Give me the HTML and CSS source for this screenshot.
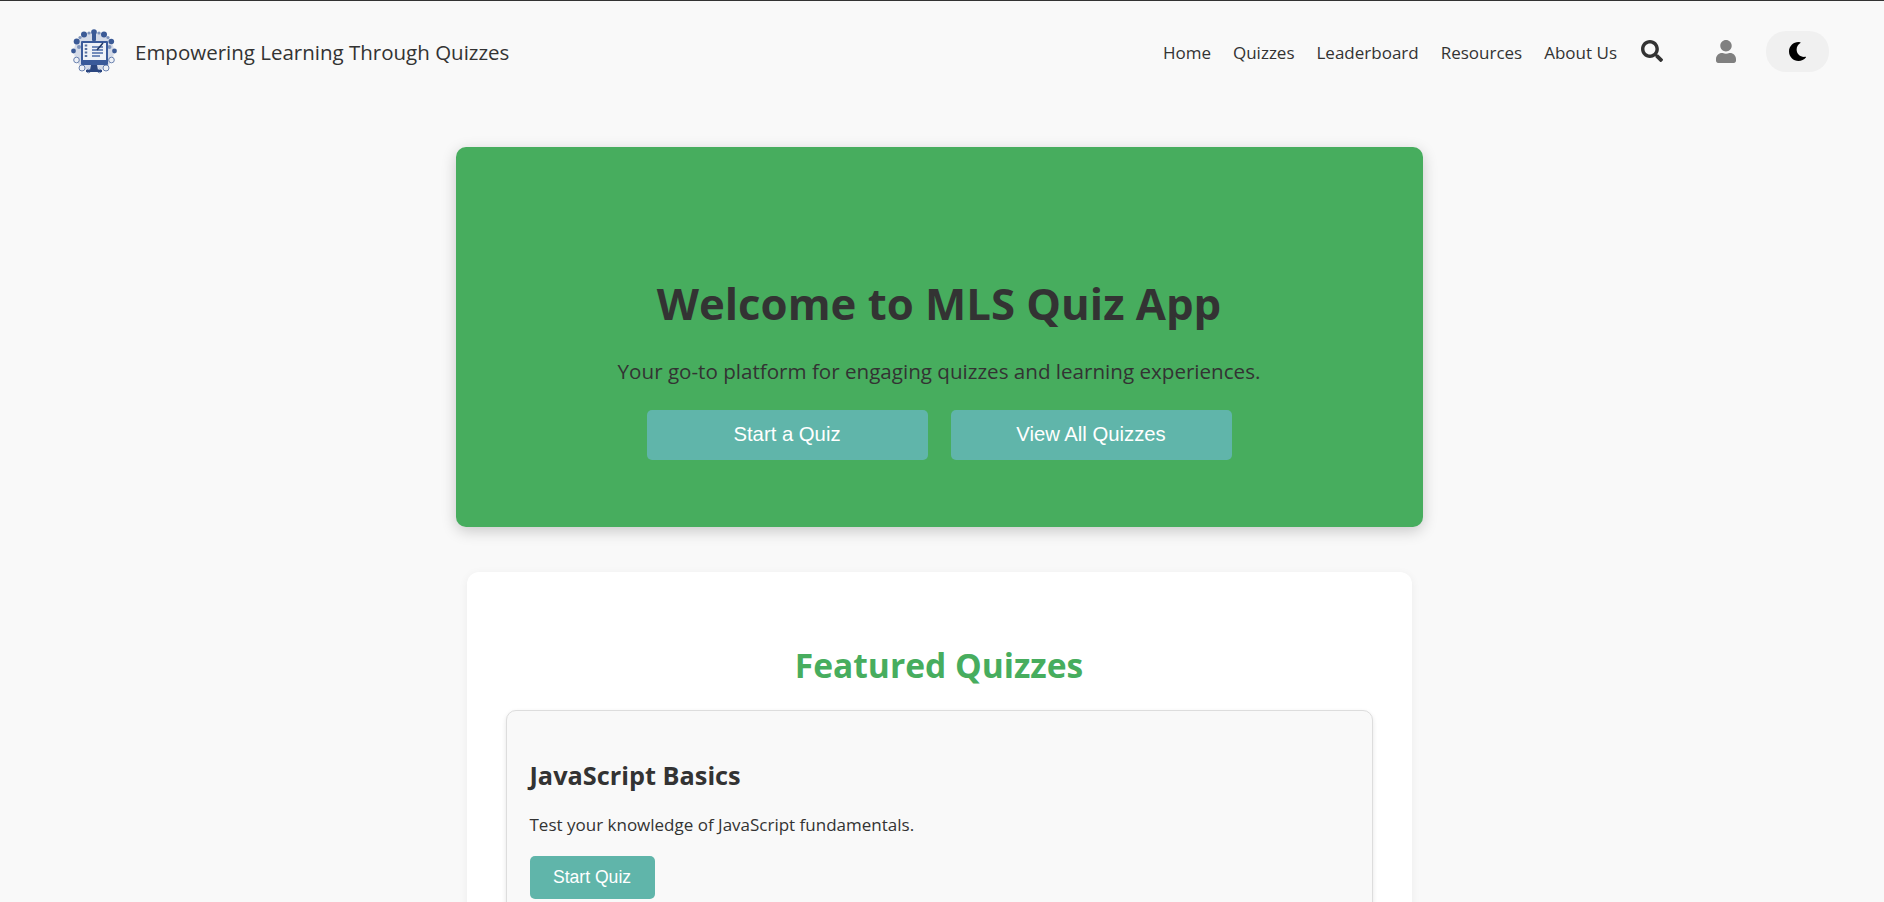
FILE: index.html
```html
<!DOCTYPE html>
<html lang="en">
  <head>
    <meta charset="UTF-8" />
    <title>MLS Quiz App</title>
    <link rel="stylesheet" href="styles.css">
  </head>
  <body>
    <!-- Header -->
    <header class="site-header">
      <a class="brand" href="#">
        <svg class="brand-logo" viewBox="0 0 48 47" aria-hidden="true">
          <!-- ring of small study icons round the monitor -->
          <circle cx="24" cy="23.500" r="20" fill="#d5dbe8" />
          <g fill="#3b5a96">
            <circle cx="24" cy="4" r="2.800" />
            <rect x="22" y="5" width="4" height="8" rx="1" />
            <circle cx="34" cy="6.500" r="3" />
            <circle cx="41.300" cy="13.500" r="2.800" />
            <circle cx="14" cy="6.500" r="3" />
            <circle cx="6.700" cy="13.500" r="3" />
            <circle cx="3.500" cy="23" r="2.400" />
            <circle cx="44.500" cy="23" r="2.400" />
          </g>
          <g fill="#7e93bb">
            <circle cx="19" cy="5" r="1.600" />
            <circle cx="29" cy="5" r="1.600" />
            <circle cx="10" cy="9.500" r="1.600" />
            <circle cx="38" cy="9.500" r="1.600" />
            <circle cx="9" cy="19" r="2" />
            <circle cx="39.500" cy="19" r="2" />
          </g>
          <g fill="#eef1f6" stroke="#5a74a6" stroke-width="0.900">
            <circle cx="41.500" cy="32" r="2.800" />
            <circle cx="36" cy="40" r="3" />
            <circle cx="6.500" cy="32" r="2.800" />
            <circle cx="12" cy="40" r="3" />
            <circle cx="29.500" cy="43" r="1.800" />
            <circle cx="18.500" cy="43" r="1.800" />
          </g>
          <rect x="11" y="13" width="27" height="24" rx="1" fill="#3a5a9a" />
          <rect x="13" y="15" width="23" height="17" fill="#eef1f7" />
          <path d="M22 19h11M22 22h11M22 25h11M22 28h8" stroke="#4a69a8" stroke-width="1.500" />
          <path d="M16 16.500v13" stroke="#56709f" stroke-width="2.500" stroke-dasharray="2 1.500" />
          <path d="M27 22l6-7" stroke="#1f3563" stroke-width="1.500" />
          <path d="M21 37h6l1 5h4v2H16v-2h4z" fill="#2b4680" />
        </svg>
        <span class="brand-name">Empowering Learning Through Quizzes</span>
      </a>

      <nav class="main-nav">
        <a href="#">Home</a>
        <a href="#">Quizzes</a>
        <a href="#">Leaderboard</a>
        <a href="#">Resources</a>
        <a href="#">About Us</a>
      </nav>

      <button class="icon-btn search-btn" aria-label="Search">
        <svg viewBox="0 0 512 512" width="22" height="22">
          <path fill="#333" d="M505 442.700L405.300 343c-4.500-4.500-10.600-7-17-7H372c27.600-35.300 44-79.700 44-128C416 93.100 322.900 0 208 0S0 93.100 0 208s93.100 208 208 208c48.300 0 92.700-16.400 128-44v16.300c0 6.400 2.500 12.500 7 17l99.700 99.700c9.400 9.400 24.600 9.400 33.900 0l28.300-28.300c9.400-9.400 9.400-24.600.1-34zM208 336c-70.700 0-128-57.200-128-128 0-70.700 57.200-128 128-128 70.700 0 128 57.200 128 128 0 70.700-57.200 128-128 128z" />
        </svg>
      </button>

      <button class="icon-btn user-btn" aria-label="Account">
        <svg viewBox="0 0 448 512" width="20" height="23">
          <path fill="#808080" d="M224 256c70.700 0 128-57.300 128-128S294.700 0 224 0 96 57.300 96 128s57.300 128 128 128zm89.600 32h-16.700c-22.200 10.200-46.900 16-72.900 16s-50.600-5.800-72.900-16h-16.700C60.200 288 0 348.200 0 422.400V464c0 26.500 21.500 48 48 48h352c26.500 0 48-21.500 48-48v-41.600c0-74.200-60.200-134.400-134.400-134.400z" />
        </svg>
      </button>

      <button class="theme-toggle" aria-label="Dark mode">
        <svg viewBox="0 0 512 512" width="19" height="19">
          <path fill="#000" d="M283.211 512c78.962 0 151.079-35.925 198.857-94.792 7.068-8.708-.639-21.430-11.562-19.350-124.203 23.654-238.262-71.576-238.262-196.954 0-72.222 38.662-138.635 101.498-174.394 9.686-5.512 7.250-20.197-3.756-22.230A258.156 258.156 0 0 0 283.211 0c-141.309 0-256 114.511-256 256 0 141.309 114.511 256 256 256z" />
        </svg>
      </button>
    </header>

    <main class="page">
      <!-- Hero -->
      <section class="hero">
        <h1>Welcome to MLS Quiz App</h1>
        <p>Your go-to platform for engaging quizzes and learning experiences.</p>
        <div class="hero-actions">
          <a class="hero-btn" href="#">Start a Quiz</a>
          <a class="hero-btn" href="#">View All Quizzes</a>
        </div>
      </section>

      <!-- Featured quizzes -->
      <section class="featured">
        <h2>Featured Quizzes</h2>
        <article class="quiz-card">
          <h3>JavaScript Basics</h3>
          <p>Test your knowledge of JavaScript fundamentals.</p>
          <a class="quiz-btn" href="#">Start Quiz</a>
        </article>
      </section>
    </main>
  </body>
</html>
```

FILE: styles.css
```css
* {
  box-sizing: border-box;
}

body {
  margin: 0;
  height: 902px;
  overflow: hidden;
  border-top: 1px solid #333;
  font-family: "Open Sans", "Noto Sans", sans-serif;
  color: #333;
  background: #f9f9f9;
}

a {
  color: inherit;
  text-decoration: none;
}

button {
  border: none;
  background: none;
  padding: 0;
  cursor: pointer;
}

/* Header */
.site-header {
  display: flex;
  align-items: center;
  height: 101px;
  padding: 0 55px 0 70px;
}

.brand {
  display: flex;
  align-items: center;
  gap: 17px;
  margin-right: auto;
}

.brand-logo {
  width: 48px;
  height: 47px;
  filter: blur(0.4px);
}

.brand-name {
  padding-top: 1px;
  font-size: 20.500px;
}

.main-nav {
  display: flex;
  gap: 22px;
  padding-top: 1px;
  font-size: 17px;
}

.icon-btn {
  display: flex;
}

.search-btn {
  margin-left: 24px;
  margin-top: -2px;
}

.user-btn {
  margin-left: 53px;
}

.theme-toggle {
  display: flex;
  align-items: center;
  justify-content: center;
  width: 63px;
  height: 41px;
  margin-left: 30px;
  border-radius: 20px;
  background: #f0f0f0;
}

/* Main */
.page {
  display: flex;
  flex-direction: column;
  align-items: center;
  padding: 45px 6px 0 0;
}

.hero {
  display: flex;
  flex-direction: column;
  align-items: center;
  justify-content: flex-end;
  width: 967px;
  height: 380px;
  padding-bottom: 67px;
  border-radius: 10px;
  background: #47ad5e;
  box-shadow: 0 4px 15px rgba(0, 0, 0, 0.2);
}

.hero h1 {
  margin: 0 0 24px;
  font-size: 43.700px;
  font-weight: 700;
}

.hero p {
  margin: 0 0 25px;
  font-size: 20.600px;
}

.hero-actions {
  display: flex;
  gap: 23px;
}

.hero-btn {
  display: flex;
  align-items: center;
  justify-content: center;
  width: 281px;
  height: 50px;
  padding-bottom: 2px;
  border-radius: 5px;
  font-family: "Liberation Sans", Arial, sans-serif;
  font-size: 20.300px;
  color: #fff;
  background: #60b5aa;
}

.featured {
  width: 945px;
  margin-top: 45px;
  padding: 70px 39px 0;
  border-radius: 12px;
  background: #fff;
  box-shadow: 0 2px 10px rgba(0, 0, 0, 0.06);
}

.featured h2 {
  margin: 0 0 22px;
  text-align: center;
  font-size: 33.600px;
  font-weight: 700;
  color: #47ad5e;
}

.quiz-card {
  padding: 47px 23px 30px;
  border: 1px solid #ddd;
  border-radius: 10px;
  background: #f9f9f9;
  box-shadow: 0 2px 5px rgba(0, 0, 0, 0.1);
}

.quiz-card h3 {
  margin: 0 0 21px;
  font-size: 25.300px;
  font-weight: 700;
}

.quiz-card p {
  margin: 0 0 20px;
  font-size: 17px;
}

.quiz-btn {
  display: inline-flex;
  align-items: center;
  justify-content: center;
  width: 125px;
  height: 43px;
  padding-bottom: 1px;
  border-radius: 5px;
  font-family: "Liberation Sans", Arial, sans-serif;
  font-size: 17.600px;
  color: #fff;
  background: #60b5aa;
}
```
